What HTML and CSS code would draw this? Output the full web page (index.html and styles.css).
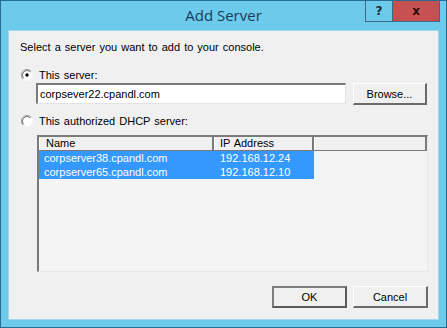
FILE: index.html
```html
<!DOCTYPE html>
<html lang="en">

<head>
    <meta charset="UTF-8">
    <title>Add Server</title>
    <link rel="stylesheet" href="styles.css">
</head>

<body>
    <div class="window">
        <div class="titlebar">
            <span class="title">Add Server</span>
            <div class="caption-buttons">
                <span class="cap-btn help">?</span>
                <span class="cap-btn close">x</span>
            </div>
        </div>

        <div class="client">
            <p class="prompt">Select a server you want to add to your console.</p>

            <label class="radio-row">
                <svg class="radio" width="12" height="12" viewBox="0 0 12 12">
                    <circle cx="6" cy="6" r="5.5" fill="#fff" stroke="#f8f8f8" />
                    <path d="M10.2 2.1 A5.5 5.5 0 0 0 1.9 10.2" fill="none" stroke="#a0a0a0" />
                    <path d="M9.3 2.9 A4.4 4.4 0 0 0 2.8 9.4" fill="none" stroke="#696969" />
                    <circle cx="6" cy="6" r="1.7" fill="#000" />
                </svg>
                <span>This server:</span>
            </label>

            <div class="server-row">
                <div class="textbox">corpsever22.cpandl.com</div>
                <button class="btn browse">Browse...</button>
            </div>

            <label class="radio-row dhcp">
                <svg class="radio" width="12" height="12" viewBox="0 0 12 12">
                    <circle cx="6" cy="6" r="5.5" fill="#fff" stroke="#f8f8f8" />
                    <path d="M10.2 2.1 A5.5 5.5 0 0 0 1.9 10.2" fill="none" stroke="#a0a0a0" />
                    <path d="M9.3 2.9 A4.4 4.4 0 0 0 2.8 9.4" fill="none" stroke="#696969" />
                </svg>
                <span>This authorized DHCP server:</span>
            </label>

            <div class="listview">
                <div class="list-header">
                    <span class="col col-name">Name</span>
                    <span class="col col-ip">IP Address</span>
                    <span class="col col-rest"></span>
                </div>
                <div class="list-row selected">
                    <span class="col col-name">corpserver38.cpandl.com</span>
                    <span class="col col-ip">192.168.12.24</span>
                </div>
                <div class="list-row selected">
                    <span class="col col-name">corpserver65.cpandl.com</span>
                    <span class="col col-ip">192.168.12.10</span>
                </div>
            </div>

            <div class="footer">
                <button class="btn default">OK</button>
                <button class="btn">Cancel</button>
            </div>
        </div>
    </div>
</body>

</html>
```

FILE: styles.css
```css
body {
    margin: 0;
    font-family: "Liberation Sans", Arial, sans-serif;
    font-size: 11px;
    word-spacing: 1px;
    color: #000;
}

.window {
    width: 447px;
    height: 328px;
    box-sizing: border-box;
    background: #6ccbea;
    border: 1px solid #2a6c8e;
    padding: 0 7px 7px 7px;
    display: flex;
    flex-direction: column;
    position: relative;
}

.titlebar {
    height: 29px;
    display: flex;
    align-items: center;
    justify-content: center;
}

.title {
    font-family: "Open Sans", "DejaVu Sans", sans-serif;
    font-size: 15px;
    word-spacing: 0;
    color: #1c3a5c;
    margin-top: -2px;
}

.caption-buttons {
    position: absolute;
    top: 0;
    right: 6px;
    display: flex;
}

.cap-btn {
    height: 20px;
    display: flex;
    align-items: center;
    justify-content: center;
    font-family: "DejaVu Sans", sans-serif;
    font-weight: bold;
    font-size: 12px;
    color: #1a2a3a;
    border: 1px solid #3c6a86;
    border-top: none;
}

.help {
    width: 26px;
    background: #6ccbea;
}

.close {
    width: 46px;
    background: #c75050;
    border-left: none;
    color: #2a0c0c;
}

.client {
    flex: 1;
    background: #f0f0f0;
    border: 1px solid #9fd9ee;
    padding: 0 10px 0 11px;
    display: flex;
    flex-direction: column;
}

.prompt {
    margin: 10px 0 0 0;
    line-height: 13px;
}

.radio-row {
    display: flex;
    align-items: center;
    gap: 6px;
    height: 13px;
    margin-top: 14px;
    margin-left: 1px;
}

.radio-row.dhcp {
    margin-top: 9px;
}

.radio {
    display: block;
}

.server-row {
    display: flex;
    gap: 7px;
    margin: 2px 0 0 16px;
}

.textbox {
    width: 310px;
    height: 21px;
    box-sizing: border-box;
    background: #fff;
    border-top: 2px solid #7a7a7a;
    border-left: 2px solid #7a7a7a;
    border-right: 1px solid #e3e3e3;
    border-bottom: 1px solid #e3e3e3;
    padding: 2px 2px;
    line-height: 14px;
}

.btn {
    width: 75px;
    height: 22px;
    box-sizing: border-box;
    font-family: inherit;
    font-size: 11px;
    background: #f0f0f0;
    border-top: 1px solid #fff;
    border-left: 1px solid #fff;
    border-right: 2px solid #6b6b6b;
    border-bottom: 2px solid #6b6b6b;
    padding: 0;
    color: #000;
}

.btn.browse {
    width: 74px;
}

.btn.default {
    border: 2px solid #5a5a5a;
    border-top-color: #7d7d7d;
    border-left-color: #7d7d7d;
}

.listview {
    margin: 8px 0 0 17px;
    width: 391px;
    height: 137px;
    box-sizing: border-box;
    background: #f4f4f4;
    border-top: 2px solid #7a7a7a;
    border-left: 2px solid #7a7a7a;
    border-right: 1px solid #e8e8e8;
    border-bottom: 1px solid #e8e8e8;
}

.list-header {
    display: flex;
    height: 13px;
    background: #f0f0f0;
    border-bottom: 1px solid #7a7a7a;
}

.list-header .col {
    box-sizing: border-box;
    height: 13px;
    line-height: 13px;
    border-right: 2px solid #7a7a7a;
    border-left: 1px solid #fff;
}

.col-name {
    width: 175px;
    padding-left: 6px;
}

.col-ip {
    width: 100px;
    padding-left: 5px;
}

.col-rest {
    flex: 1;
}

.list-row {
    display: flex;
    height: 14px;
    line-height: 14px;
}

.list-row .col {
    box-sizing: border-box;
}

.list-row .col-name {
    padding-left: 5px;
}

.list-row .col-ip {
    padding-left: 6px;
}

.selected .col {
    background: #3399ff;
    color: #fff;
}

.footer {
    display: flex;
    justify-content: flex-end;
    gap: 6px;
    margin: 14px 0 0 0;
}
```
